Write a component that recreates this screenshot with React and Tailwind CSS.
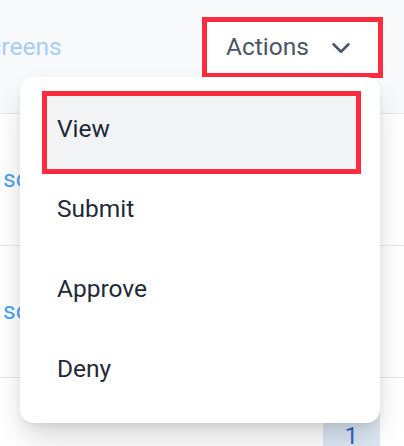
import React from "react";
import { ChevronDown } from "lucide-react";

const items = ["View", "Submit", "Approve", "Deny"];

function App() {
  return (
    <div className="relative w-[404px] h-[446px] overflow-hidden bg-white font-['Roboto',sans-serif] text-[24.5px]">
      {/* table rows */}
      <div className="flex flex-col">
        <div className="h-[114px] pb-[18px] flex items-center justify-between bg-[#f8f9fb] border-b border-gray-200">
          <span className="-ml-[26px] text-[#a6cdf8]">Screens</span>
          <div className="mr-[21px] w-[181px] h-[61px] border-[5px] border-[#ff2b3e] bg-white flex items-center pl-[19px] text-[#4b5563]">
            <span>Actions</span>
            <ChevronDown size={30} strokeWidth={2} className="ml-[17px]" />
          </div>
        </div>
        <div className="h-[132px] flex items-center pl-[3px] border-b border-gray-200 text-[#4c9ff6]">
          <span>scores</span>
        </div>
        <div className="h-[132px] flex items-center pl-[3px] border-b border-gray-200 text-[#4c9ff6]">
          <span>scores</span>
        </div>
        <div className="flex justify-end pr-[24px] pt-[22px]">
          <div className="w-[57px] h-[72px] bg-[#dde8f6] text-[#3565cc] flex items-center justify-center">
            1
          </div>
        </div>
      </div>

      {/* dropdown menu */}
      <div className="absolute left-[20px] top-[77px] w-[360px] rounded-[14px] bg-white pt-[12px] pb-[14px] pl-[22px] pr-[19px] shadow-[0_16px_30px_-4px_rgba(0,0,0,0.18),0_4px_10px_-4px_rgba(0,0,0,0.1)]">
        {items.map((label, i) => (
          <div key={label} className="relative h-[80px] flex items-center pl-[15px] text-[#1f2937]">
            {i === 0 && (
              <div className="absolute left-0 right-0 top-[2px] h-[83px] border-[5px] border-[#ff2b3e] bg-[#f2f3f5]" />
            )}
            <span className="relative">{label}</span>
          </div>
        ))}
      </div>
    </div>
  );
}

export default App;
